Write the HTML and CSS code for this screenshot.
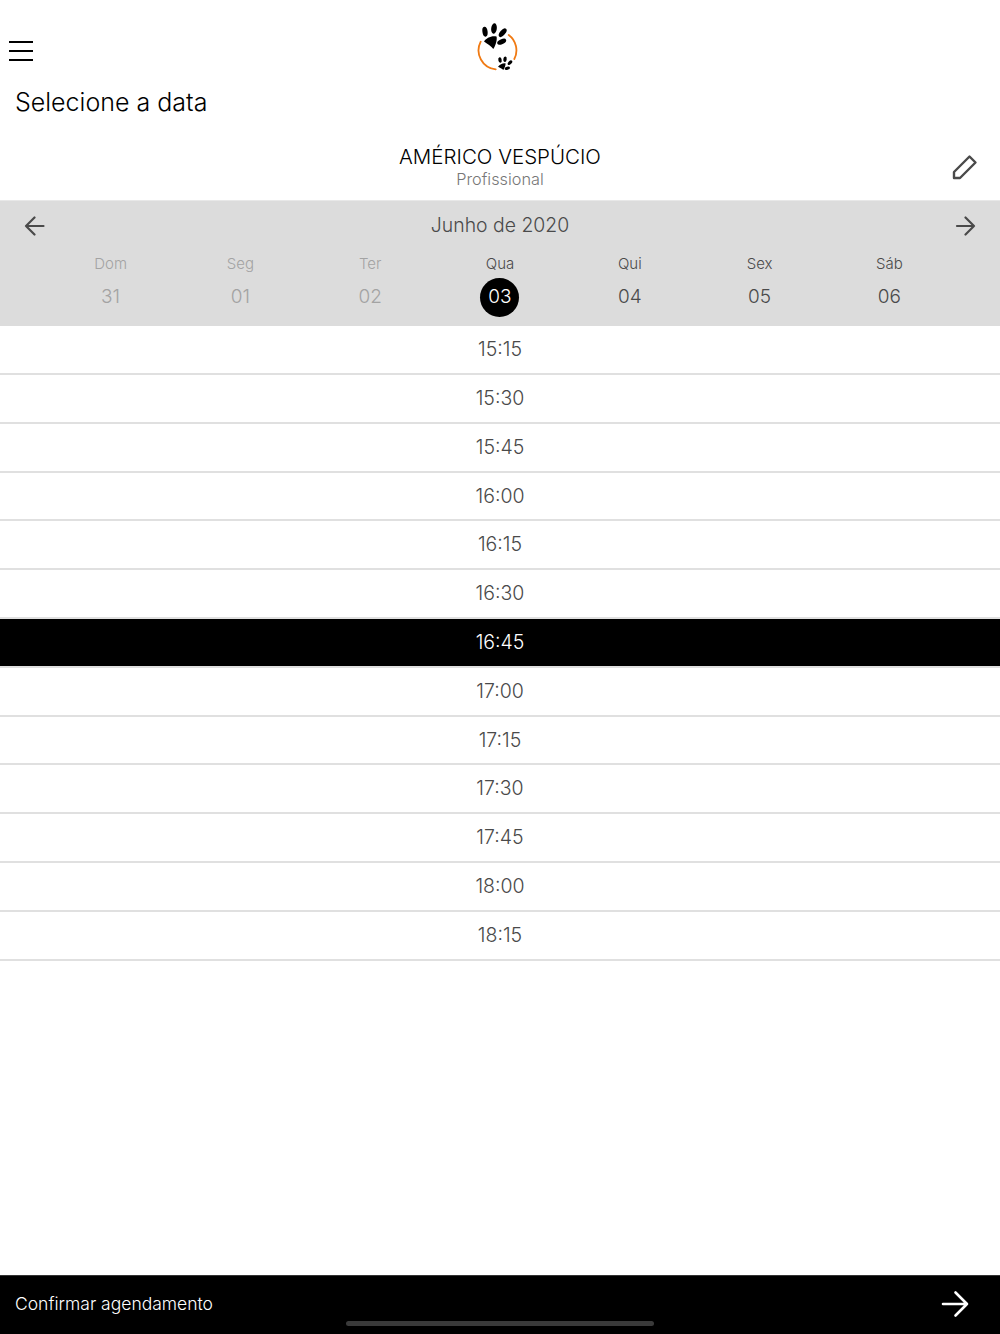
FILE: index.html
```html
<!DOCTYPE html>
<html lang="pt-BR">
<head>
    <meta charset="UTF-8">
    <title>Selecione a data</title>
    <link rel="stylesheet" href="styles.css">
</head>
<body>
    <div class="page">
        <header class="top-bar">
            <svg class="menu-icon" width="24" height="20" viewBox="0 0 24 20">
                <path d="M0 1H24M0 10H24M0 19H24" stroke="#000" stroke-width="2"/>
            </svg>
            <svg class="logo" width="44" height="52" viewBox="0 0 44 52">
                <path d="M4.700 19.700A19 19 0 0 0 19.700 47.300M32.700 13A19 19 0 0 1 38.300 37" fill="none" stroke="#f07a13" stroke-width="1.800" stroke-linecap="round"/>
                <ellipse cx="9" cy="9.700" rx="2.600" ry="5" transform="rotate(-8 9 9.700)"/>
                <ellipse cx="18" cy="6.500" rx="2.800" ry="5.200" transform="rotate(8 18 6.500)"/>
                <ellipse cx="26.700" cy="10.700" rx="2.600" ry="5.200" transform="rotate(40 26.700 10.700)"/>
                <ellipse cx="25.700" cy="19.700" rx="2.400" ry="4.800" transform="rotate(65 25.700 19.700)"/>
                <path d="M8 19.500C10 16.500 15 13.500 20.500 14.500C21.500 17.500 19.500 24 17.300 27C15.500 24.500 11 21.500 8 19.500Z"/>
                <ellipse cx="24" cy="38" rx="1.700" ry="2.800" transform="rotate(-10 24 38)"/>
                <ellipse cx="29" cy="37.300" rx="1.700" ry="2.800" transform="rotate(8 29 37.300)"/>
                <ellipse cx="34" cy="40.700" rx="1.600" ry="2.800" transform="rotate(45 34 40.700)"/>
                <ellipse cx="31.300" cy="46.300" rx="1.500" ry="2.700" transform="rotate(75 31.300 46.300)"/>
                <path d="M22 44.700C24 42.500 26.500 41 29.500 41.300C29.800 43.500 28.500 46.500 27.300 48C25.800 46.500 24 45.500 22 44.700Z"/>
            </svg>
        </header>
        <h1 class="page-title">Selecione a data</h1>

        <section class="professional">
            <div class="professional-name">AMÉRICO VESPÚCIO</div>
            <div class="professional-role">Profissional</div>
            <svg class="edit-icon" width="26" height="26" viewBox="0 0 26 26">
                <path d="M2 24V18L17.500 2.500L23.500 8.500L8 24Z" fill="none" stroke="#4a4a4a" stroke-width="2.400" stroke-linejoin="round"/>
            </svg>
        </section>

        <section class="calendar">
            <div class="month-row">
                <svg class="arrow" width="22" height="20" viewBox="0 0 22 20">
                    <path d="M19.500 10H2M10.500 1.500L2 10L10.500 18.500" fill="none" stroke="#4a4a4a" stroke-width="2.200" stroke-linecap="round" stroke-linejoin="round"/>
                </svg>
                <div class="month-label">Junho de 2020</div>
                <svg class="arrow" width="22" height="20" viewBox="0 0 22 20">
                    <path d="M3 10H20M11.500 1.500L20 10L11.500 18.500" fill="none" stroke="#4a4a4a" stroke-width="2.200" stroke-linecap="round" stroke-linejoin="round"/>
                </svg>
            </div>
            <div class="week">
                <div class="day past"><span class="day-name">Dom</span><span class="day-num">31</span></div>
                <div class="day past"><span class="day-name">Seg</span><span class="day-num">01</span></div>
                <div class="day past"><span class="day-name">Ter</span><span class="day-num">02</span></div>
                <div class="day selected"><span class="day-name">Qua</span><span class="day-num">03</span></div>
                <div class="day"><span class="day-name">Qui</span><span class="day-num">04</span></div>
                <div class="day"><span class="day-name">Sex</span><span class="day-num">05</span></div>
                <div class="day"><span class="day-name">Sáb</span><span class="day-num">06</span></div>
            </div>
        </section>

        <div class="times">
            <div class="time">15:15</div>
            <div class="time">15:30</div>
            <div class="time">15:45</div>
            <div class="time">16:00</div>
            <div class="time">16:15</div>
            <div class="time">16:30</div>
            <div class="time active">16:45</div>
            <div class="time">17:00</div>
            <div class="time">17:15</div>
            <div class="time">17:30</div>
            <div class="time">17:45</div>
            <div class="time">18:00</div>
            <div class="time">18:15</div>
        </div>

        <footer class="confirm-bar">
            <span class="confirm-text">Confirmar agendamento</span>
            <svg class="confirm-arrow" width="28" height="28" viewBox="0 0 28 28">
                <path d="M2 14H26M14.500 2.500L26 14L14.500 25.500" fill="none" stroke="#fff" stroke-width="2.600" stroke-linecap="round" stroke-linejoin="round"/>
            </svg>
            <div class="home-bar"></div>
        </footer>
    </div>
</body>
</html>
```

FILE: styles.css
```css
* { box-sizing: border-box; }

body {
    margin: 0;
    background-color: white;
    font-family: Inter, "Noto Sans", sans-serif;
    font-weight: 300;
    color: #4a4a4a;
}

.page {
    display: flex;
    flex-direction: column;
    height: 1334px;
}

.top-bar {
    position: relative;
    height: 88px;
    flex-shrink: 0;
}
.menu-icon {
    position: absolute;
    left: 9px;
    top: 41px;
}
.logo {
    position: absolute;
    left: 476px;
    top: 22px;
}

.page-title {
    margin: 0;
    padding-left: 15px;
    height: 46px;
    font-size: 25px;
    line-height: 28px;
    font-weight: 300;
    color: #000;
}

.professional {
    position: relative;
    height: 66px;
    padding-top: 9px;
    text-align: center;
}
.professional-name {
    font-size: 20.500px;
    line-height: 27px;
    color: #000;
}
.professional-role {
    font-size: 16.300px;
    line-height: 18px;
    color: #777;
}
.edit-icon {
    position: absolute;
    right: 22px;
    top: 20px;
}

.calendar {
    height: 126px;
    background-color: #dcdcdc;
    border-top: 1px solid #e8e8e8;
}
.month-row {
    display: flex;
    justify-content: space-between;
    align-items: center;
    height: 48px;
    padding: 0 24px;
}
.month-label {
    font-size: 19.400px;
    color: #4a4a4a;
}
.arrow {
    margin-top: 2px;
}
.week {
    display: grid;
    grid-template-columns: repeat(7, 129.800px);
    justify-content: center;
}
.day {
    display: flex;
    flex-direction: column;
    align-items: center;
}
.day-name {
    padding-top: 1px;
    height: 28px;
    font-size: 15px;
    line-height: 28px;
}
.day-num {
    width: 39px;
    height: 39px;
    margin-top: 1px;
    border-radius: 50%;
    font-size: 19px;
    line-height: 38px;
    text-align: center;
}
.day.past { color: #a3a3a3; }
.day.selected .day-num {
    background-color: #000;
    color: white;
}

.times {
    flex: 1;
    padding-top: 0.300px;
}
.time {
    height: 48.800px;
    border-bottom: 2px solid #e0e0e0;
    font-size: 19.500px;
    line-height: 47.500px;
    text-align: center;
}
.time.active {
    background-color: #000;
    color: white;
}

.confirm-bar {
    position: relative;
    display: flex;
    justify-content: space-between;
    align-items: center;
    height: 59px;
    padding: 0 31px 2px 15px;
    background-color: #000;
    border-top: 1px solid #333;
    flex-shrink: 0;
}
.confirm-text {
    font-size: 17.500px;
    color: white;
    margin-bottom: 1px;
}
.home-bar {
    position: absolute;
    left: 346px;
    bottom: 8px;
    width: 308px;
    height: 5px;
    border-radius: 3px;
    background-color: #3a3a3a;
}
```
